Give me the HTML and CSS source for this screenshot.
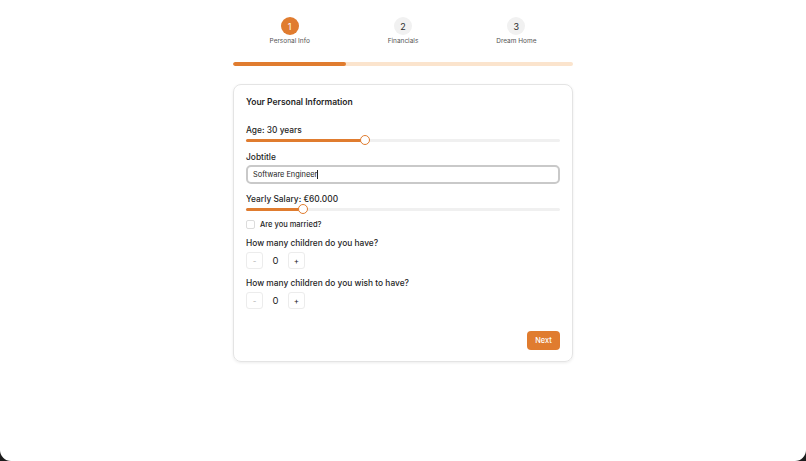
FILE: index.html
```html
<!DOCTYPE html>
<html lang="en">
<head>
<meta charset="utf-8">
<title>Personal Info</title>
<link rel="stylesheet" href="styles.css">
</head>
<body>
<div class="page">
  <div class="wrap">
    <div class="steps">
      <div class="step active"><div class="circle">1</div><div class="step-label">Personal Info</div></div>
      <div class="step"><div class="circle">2</div><div class="step-label">Financials</div></div>
      <div class="step"><div class="circle">3</div><div class="step-label">Dream Home</div></div>
    </div>
    <div class="progress"><div class="progress-fill" style="width:33.33%"></div></div>

    <div class="card">
      <h2 class="title">Your Personal Information</h2>

      <div class="field f-age">
        <div class="label">Age: 30 years</div>
        <div class="slider">
          <div class="track"><div class="fill" style="width:37.9%"></div></div>
          <div class="thumb" style="left:37.9%"></div>
        </div>
      </div>

      <div class="field f-job">
        <div class="label">Jobtitle</div>
        <div class="input">Software Engineer<span class="caret"></span></div>
      </div>

      <div class="field f-salary">
        <div class="label">Yearly Salary: €60.000</div>
        <div class="slider">
          <div class="track"><div class="fill" style="width:18.2%"></div></div>
          <div class="thumb" style="left:18.2%"></div>
        </div>
      </div>

      <label class="check-row">
        <span class="checkbox"></span>
        <span class="check-label">Are you married?</span>
      </label>

      <div class="field f-kids">
        <div class="label">How many children do you have?</div>
        <div class="counter">
          <button class="cbtn minus">-</button>
          <span class="cval">0</span>
          <button class="cbtn">+</button>
        </div>
      </div>

      <div class="field f-wish">
        <div class="label">How many children do you wish to have?</div>
        <div class="counter">
          <button class="cbtn minus">-</button>
          <span class="cval">0</span>
          <button class="cbtn">+</button>
        </div>
      </div>

      <div class="actions">
        <button class="next">Next</button>
      </div>
    </div>
  </div>
</div>
</body>
</html>
```
FILE: styles.css
```css
* { box-sizing: border-box; }
html { background: #1c1c1c; height: 100%; }
body {
  margin: 0;
  font-family: "Inter", "Liberation Sans", sans-serif;
  color: #1f1f1f;
}
.page {
  background: #ffffff;
  height: 461px;
  border-radius: 0 0 11px 11px;
  padding-top: 17px;
}
.wrap {
  width: 340px;
  margin: 0 auto;
}
.steps {
  display: grid;
  grid-template-columns: 1fr 1fr 1fr;
}
.step {
  display: flex;
  flex-direction: column;
  align-items: center;
}
.circle {
  width: 18px;
  height: 18px;
  border-radius: 50%;
  background: #f1f1f1;
  color: #2a2a2a;
  font-size: 9px;
  display: flex;
  align-items: center;
  justify-content: center;
}
.step.active .circle {
  background: #e07c2f;
  color: #fff;
}
.step-label {
  margin-top: 2px;
  font-size: 6.5px;
  line-height: 9px;
  color: #555;
}
.progress {
  margin-top: 16px;
  height: 4px;
  border-radius: 2px;
  background: #fbe4cd;
  overflow: hidden;
}
.progress-fill {
  height: 100%;
  background: #e07c2f;
  border-radius: 2px;
}
.card {
  margin-top: 18px;
  border: 1px solid #e4e4e4;
  border-radius: 8px;
  box-shadow: 0 1px 3px rgba(0,0,0,0.08);
  padding: 11px 12px 11px;
}
.title {
  margin: 0;
  font-size: 8.5px;
  line-height: 12px;
  font-weight: 600;
}
.label {
  font-size: 8.4px;
  line-height: 12px;
  font-weight: 500;
}
.f-age { margin-top: 16px; }
.f-job { margin-top: 7px; }
.f-salary { margin-top: 9px; }
.slider {
  position: relative;
  height: 8px;
  display: flex;
  align-items: center;
}
.track {
  width: 100%;
  height: 3px;
  border-radius: 2px;
  background: #f0f0f0;
}
.fill {
  height: 100%;
  background: #e07c2f;
  border-radius: 2px;
}
.thumb {
  position: absolute;
  top: -1px;
  width: 10px;
  height: 10px;
  margin-left: -5px;
  border-radius: 50%;
  background: #fff;
  border: 1px solid #e07c2f;
}
.input {
  margin-top: 2px;
  height: 19px;
  border: 2px solid #c9c9c9;
  border-radius: 5px;
  font-size: 7.4px;
  display: flex;
  align-items: center;
  padding-left: 5px;
  color: #222;
}
.caret {
  display: inline-block;
  width: 1px;
  height: 9px;
  background: #222;
}
.check-row {
  margin-top: 6px;
  height: 10px;
  display: flex;
  align-items: center;
  gap: 5px;
}
.checkbox {
  width: 9px;
  height: 9px;
  border: 1px solid #dcdcdc;
  border-radius: 2px;
  background: #fff;
}
.check-label {
  font-size: 7.5px;
  font-weight: 500;
}
.f-kids, .f-wish { margin-top: 8px; }
.counter {
  margin-top: 3px;
  display: flex;
  align-items: center;
}
.cbtn {
  width: 17px;
  height: 17px;
  padding: 0;
  border: 1px solid #ececec;
  border-radius: 3px;
  background: #fff;
  font-family: inherit;
  font-size: 8px;
  color: #222;
  display: flex;
  align-items: center;
  justify-content: center;
}
.cbtn.minus { color: #b5b5b5; }
.cval {
  width: 25px;
  text-align: center;
  font-size: 9.5px;
}
.actions {
  margin-top: 22px;
  display: flex;
  justify-content: flex-end;
}
.next {
  width: 33px;
  height: 19px;
  padding: 0;
  border: none;
  border-radius: 4px;
  background: #e07c2f;
  color: #fff;
  font-family: inherit;
  font-size: 7.4px;
  font-weight: 500;
}
```
